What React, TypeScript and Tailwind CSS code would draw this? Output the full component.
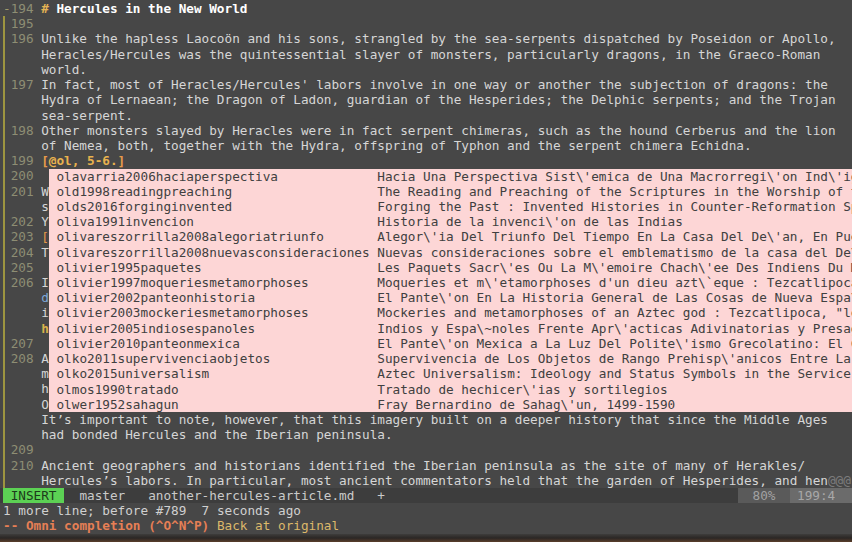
import type { ReactNode } from "react";

type Row = {
  mark: "-" | "|";
  num?: string;
  text: ReactNode;
};

const MONO = "font-['DejaVu_Sans_Mono','Liberation_Mono',monospace]";

const heading = (
  <span className="font-bold text-white">
    <span className="text-[#e5b454]">#</span> Hercules in the New World
  </span>
);

const citation = (
  <span className="font-bold text-[#e8b24e]">
    <span className="text-[#e89a4a]">[</span>@ol, 5-6.
    <span className="text-[#e89a4a]">]</span>
  </span>
);

// rows 200-208 sit under the completion menu, only their first column shows
const ROWS: Row[] = [
  { mark: "-", num: "194", text: heading },
  { mark: "|", num: "195", text: "" },
  { mark: "|", num: "196", text: "Unlike the hapless Laocoön and his sons, strangled by the sea-serpents dispatched by Poseidon or Apollo," },
  { mark: "|", text: "Heracles/Hercules was the quintessential slayer of monsters, particularly dragons, in the Graeco-Roman" },
  { mark: "|", text: "world." },
  { mark: "|", num: "197", text: "In fact, most of Heracles/Hercules' labors involve in one way or another the subjection of dragons: the" },
  { mark: "|", text: "Hydra of Lernaean; the Dragon of Ladon, guardian of the Hesperides; the Delphic serpents; and the Trojan" },
  { mark: "|", text: "sea-serpent." },
  { mark: "|", num: "198", text: "Other monsters slayed by Heracles were in fact serpent chimeras, such as the hound Cerberus and the lion" },
  { mark: "|", text: "of Nemea, both, together with the Hydra, offspring of Typhon and the serpent chimera Echidna." },
  { mark: "|", num: "199", text: citation },
  { mark: "|", num: "200", text: "" },
  { mark: "|", num: "201", text: "W" },
  { mark: "|", text: "s" },
  { mark: "|", num: "202", text: "Y" },
  { mark: "|", num: "203", text: <span className="text-[#e89a4a]">[</span> },
  { mark: "|", num: "204", text: "T" },
  { mark: "|", num: "205", text: "" },
  { mark: "|", num: "206", text: "I" },
  { mark: "|", text: <span className="text-[#7fa8d8]">d</span> },
  { mark: "|", text: "i" },
  { mark: "|", text: <span className="font-bold text-[#d9b24c]">h</span> },
  { mark: "|", num: "207", text: "" },
  { mark: "|", num: "208", text: "A" },
  { mark: "|", text: "m" },
  { mark: "|", text: "h" },
  { mark: "|", text: "O" },
  { mark: "|", text: "It’s important to note, however, that this imagery built on a deeper history that since the Middle Ages" },
  { mark: "|", text: "had bonded Hercules and the Iberian peninsula." },
  { mark: "|", num: "209", text: "" },
  { mark: "|", num: "210", text: "Ancient geographers and historians identified the Iberian peninsula as the site of many of Herakles/" },
  {
    mark: "|",
    text: (
      <>
        Hercules’s labors. In particular, most ancient commentators held that the garden of Hesperides, and hen
        <span className="text-[#7c7c7c]">@@@</span>
      </>
    ),
  },
];

const COMPLETIONS: [string, string][] = [
  ["olavarria2006haciaperspectiva", "Hacia Una Perspectiva Sist\\'emica de Una Macrorregi\\'on Ind\\'igena"],
  ["old1998readingpreaching", "The Reading and Preaching of the Scriptures in the Worship of the Christian Church"],
  ["olds2016forginginvented", "Forging the Past : Invented Histories in Counter-Reformation Spain"],
  ["oliva1991invencion", "Historia de la invenci\\'on de las Indias"],
  ["olivareszorrilla2008alegoriatriunfo", "Alegor\\'ia Del Triunfo Del Tiempo En La Casa Del De\\'an, En Puebla"],
  ["olivareszorrilla2008nuevasconsideraciones", "Nuevas consideraciones sobre el emblematismo de la casa del De\\'an"],
  ["olivier1995paquetes", "Les Paquets Sacr\\'es Ou La M\\'emoire Chach\\'ee Des Indiens Du Mexique"],
  ["olivier1997moqueriesmetamorphoses", "Moqueries et m\\'etamorphoses d'un dieu azt\\`eque : Tezcatlipoca"],
  ["olivier2002panteonhistoria", "El Pante\\'on En La Historia General de Las Cosas de Nueva Espa\\~na"],
  ["olivier2003mockeriesmetamorphoses", "Mockeries and metamorphoses of an Aztec god : Tezcatlipoca, \"lord of the smoking mirror\""],
  ["olivier2005indiosespanoles", "Indios y Espa\\~noles Frente Apr\\'acticas Adivinatorias y Presagios"],
  ["olivier2010panteonmexica", "El Pante\\'on Mexica a La Luz Del Polite\\'ismo Grecolatino: El Caso de Tezcatlipoca"],
  ["olko2011supervivenciaobjetos", "Supervivencia de Los Objetos de Rango Prehisp\\'anicos Entre La Nobleza"],
  ["olko2015universalism", "Aztec Universalism: Ideology and Status Symbols in the Service of Empire"],
  ["olmos1990tratado", "Tratado de hechicer\\'ias y sortilegios"],
  ["olwer1952sahagun", "Fray Bernardino de Sahag\\'un, 1499-1590"],
];

function BufferRow({ row }: { row: Row }) {
  return (
    <div className="flex h-[15.23px] whitespace-pre">
      {row.mark === "-" ? (
        <span className="w-[1ch] shrink-0 text-[#9f9a6b]">-</span>
      ) : (
        <span className="w-[1ch] shrink-0 border-l-2 border-[#9d9540]" />
      )}
      <span className="w-[4ch] shrink-0 text-[#8e8e74]">{row.num ?? ""}</span>
      <span className="text-[#d6d6d6]">{row.text}</span>
    </div>
  );
}

function CompletionMenu() {
  return (
    <div className="absolute top-[168.5px] left-[calc(3px+6ch)] right-0 overflow-hidden bg-[#fdd6d6] text-[#404040] whitespace-pre">
      {COMPLETIONS.map(([word, menu]) => (
        <div key={word} className="h-[15.23px]">
          {" " + word.padEnd(41, " ") + " " + menu}
        </div>
      ))}
    </div>
  );
}

function StatusLine() {
  return (
    <div className="flex h-[15.23px] whitespace-pre bg-[#3d3d3d] pl-[3px]">
      <span className="bg-[#5cd154] text-[#1d3a1b]"> INSERT </span>
      <span className="text-[#cacaca]">{"  master   another-hercules-article.md   +"}</span>
      <span className="flex-1" />
      <span className="w-[52px] bg-[#5a5a5a] text-center text-[#a2a2a2]">80%</span>
      <span className="w-[62px] bg-[#6b6b6b] pl-[7px] text-[#a8a8a8]">199:4</span>
    </div>
  );
}

export default function App() {
  return (
    <div className={`flex h-[542px] w-[852px] flex-col overflow-hidden bg-[#474747] text-[12.7px] leading-[15.23px] ${MONO}`}>
      <div className="relative pt-[1px]">
        <div className="pl-[3px]">
          {ROWS.map((row, i) => (
            <BufferRow key={i} row={row} />
          ))}
        </div>
        <CompletionMenu />
      </div>
      <StatusLine />
      <div className="h-[15.23px] whitespace-pre pl-[3px] text-[#d0d0d0]">
        1 more line; before #789  7 seconds ago
      </div>
      <div className="h-[15.23px] whitespace-pre pl-[3px]">
        <span className="font-bold text-[#e67f55]">-- Omni completion (^O^N^P)</span>
        <span className="text-[#dcb86a]"> Back at original</span>
      </div>
      <div className="flex-1 bg-linear-to-b from-[#3e3d3c] via-[#2b2725] to-[#5a3d2a]" />
    </div>
  );
}
